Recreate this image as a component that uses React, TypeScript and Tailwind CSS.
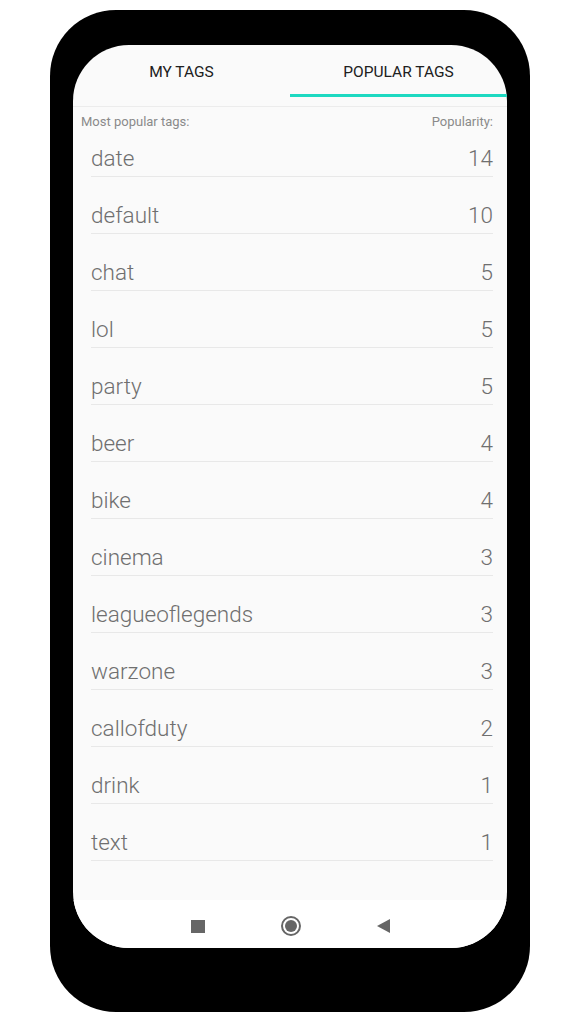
import React, { useState } from "react";

const tags = [
  { name: "date", count: 14 },
  { name: "default", count: 10 },
  { name: "chat", count: 5 },
  { name: "lol", count: 5 },
  { name: "party", count: 5 },
  { name: "beer", count: 4 },
  { name: "bike", count: 4 },
  { name: "cinema", count: 3 },
  { name: "leagueoflegends", count: 3 },
  { name: "warzone", count: 3 },
  { name: "callofduty", count: 2 },
  { name: "drink", count: 1 },
  { name: "text", count: 1 },
];

const App = () => {
  const [tab, setTab] = useState(1);

  return (
    <div className="w-[585px] h-[1024px] bg-white pt-[10px] pl-[50px] font-['Roboto',sans-serif]">
      {/* phone frame */}
      <div className="w-[480px] h-[1002px] bg-black rounded-[66px] pt-[35px] pb-[64px] px-[23px]">
        <div className="h-full bg-[#fafafa] rounded-[56px] overflow-hidden flex flex-col">
          {/* tabs */}
          <div className="flex h-[62px] border-b border-[#ececec]">
            {["MY TAGS", "POPULAR TAGS"].map((t, i) => (
              <button
                key={t}
                onClick={() => setTab(i)}
                className="flex-1 flex flex-col items-center"
              >
                <span className="flex-1 flex items-center pt-[6px] text-[15.5px] text-[#202020]">
                  {t}
                </span>
                <span
                  className={
                    tab === i
                      ? "w-full h-[3px] mb-[9px] bg-[#1dd9c1]"
                      : "w-full h-[3px] mb-[9px]"
                  }
                />
              </button>
            ))}
          </div>

          {/* list */}
          <div className="flex-1 pt-[7px]">
            <div className="flex justify-between pl-[8px] pr-[14px] text-[13px] leading-[16px] text-[#8a8a8a]">
              <span>Most popular tags:</span>
              <span>Popularity:</span>
            </div>
            <div className="flex flex-col gap-[26px] pt-[16px] pl-[18px] pr-[14px]">
              {tags.map((tag) => (
                <div
                  key={tag.name}
                  className="flex justify-between pb-[5px] border-b border-[#e8e8e8] text-[22.5px] leading-[25px] font-light text-[#6f6f6f]"
                >
                  <span>{tag.name}</span>
                  <span>{tag.count}</span>
                </div>
              ))}
            </div>
          </div>

          {/* nav bar */}
          <div className="h-[48px] bg-white flex items-center justify-center gap-[76px] pt-[4px]">
            <div className="w-[14px] h-[13px] bg-[#666666]" />
            <div className="w-[20px] h-[20px] rounded-full border-[2px] border-[#666666] flex items-center justify-center">
              <div className="w-[12px] h-[12px] rounded-full bg-[#666666]" />
            </div>
            <svg width="13" height="14" viewBox="0 0 13 14">
              <path d="M0 7 L13 0 L13 14 Z" fill="#666666" />
            </svg>
          </div>
        </div>
      </div>
    </div>
  );
};

export default App;
